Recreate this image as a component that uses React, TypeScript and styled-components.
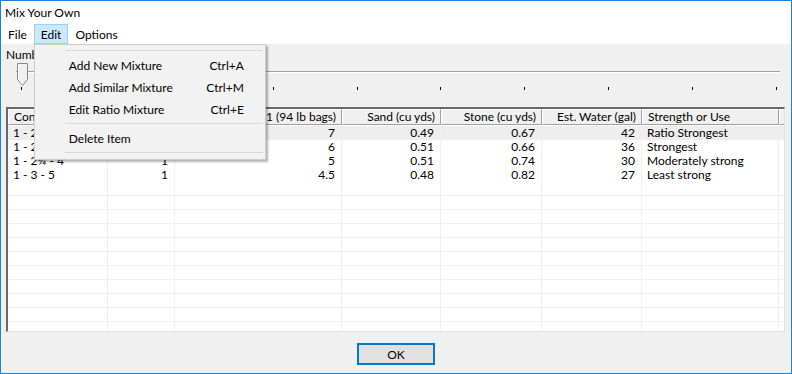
import React from 'react'
import styled, { createGlobalStyle } from 'styled-components'

const GlobalStyle = createGlobalStyle`
  html, body {
    margin: 0;
    padding: 0;
    background: #ffffff;
  }
  body {
    font-family: 'Segoe UI', Lato, 'Noto Sans', Arial, sans-serif;
    font-size: 12px;
    color: #000;
  }
`

const Window = styled.div`
  width: 792px;
  height: 374px;
  box-sizing: border-box;
  border: 1px solid #1883d7;
  display: flex;
  flex-direction: column;
  background: #f0f0f0;
  overflow: hidden;
`

const TitleBar = styled.div`
  height: 23px;
  background: #fff;
  display: flex;
  align-items: center;
  padding-left: 4px;
  font-size: 12px;
`

const MenuBar = styled.div`
  height: 20px;
  background: #fff;
  display: flex;
  align-items: stretch;
`

interface MenuItemProps {
  active?: boolean
}

const MenuBarItem = styled.div<MenuItemProps>`
  position: relative;
  display: flex;
  align-items: center;
  padding: 0 6px;
  border: 1px solid ${(p) => (p.active ? '#99d1ff' : 'transparent')};
  background: ${(p) => (p.active ? '#cce8ff' : 'transparent')};
`

const Dropdown = styled.div`
  position: absolute;
  top: 19px;
  left: -1px;
  width: 232px;
  box-sizing: border-box;
  background: #f2f2f2;
  border: 1px solid #cccccc;
  box-shadow: 2px 2px 2px rgba(0, 0, 0, 0.3);
  padding: 2px 2px 3px 2px;
  z-index: 10;
`

const DropItem = styled.div`
  height: 22px;
  display: flex;
  align-items: center;
  justify-content: space-between;
  padding: 0 19px 0 32px;
  white-space: nowrap;
`

const Separator = styled.div`
  height: 7px;
  display: flex;
  align-items: center;
  padding-left: 28px;

  &::after {
    content: '';
    flex: 1;
    height: 1px;
    background: #d7d7d7;
  }
`

const Client = styled.div`
  flex: 1;
  display: flex;
  flex-direction: column;
  padding: 0 5px;
  min-height: 0;
`

const Label = styled.div`
  height: 14px;
  margin-top: 4px;
  line-height: 14px;
  white-space: nowrap;
`

const SliderBox = styled.div`
  position: relative;
  height: 45px;
`

const Track = styled.div`
  position: absolute;
  left: 10px;
  right: 6px;
  top: 9px;
  height: 1px;
  background: #a0a0a0;
  border-bottom: 1px solid #fff;
`

const Ticks = styled.div`
  position: absolute;
  left: 15px;
  right: 9px;
  top: 25px;
  display: flex;
  justify-content: space-between;
`

const Tick = styled.div`
  width: 1px;
  height: 3px;
  background: #000;
`

const Thumb = styled.svg`
  position: absolute;
  left: 11px;
  top: 1px;
`

const ListView = styled.div`
  flex: 1;
  min-height: 0;
  border-style: solid;
  border-width: 2px 1px 1px 2px;
  border-color: #696969 #e3e3e3 #e3e3e3 #696969;
  background: #fff;
  overflow: hidden;
  display: flex;
  flex-direction: column;
  margin-right: 1px;
`

const cols = '100px 67px 167px 99px 101px 100px 137px 1fr'

const HeaderRow = styled.div`
  display: grid;
  grid-template-columns: ${cols};
  height: 16px;
  flex-shrink: 0;
  margin-bottom: 1px;
  background: #f0f0f0;
`

interface CellProps {
  right?: boolean
}

const HeadCell = styled.div<CellProps>`
  box-sizing: border-box;
  border-style: solid;
  border-width: 1px;
  border-color: #fff #a0a0a0 #a0a0a0 #fff;
  display: flex;
  align-items: center;
  justify-content: ${(p) => (p.right ? 'flex-end' : 'flex-start')};
  padding: 0 5px;
  white-space: nowrap;
  overflow: hidden;
  line-height: 14px;
`

interface RowProps {
  hot?: boolean
}

const Row = styled.div<RowProps>`
  display: grid;
  grid-template-columns: ${cols};
  height: 14px;
  flex-shrink: 0;
  background: ${(p) => (p.hot ? '#eeeeee' : '#fff')};
`

const Cell = styled.div<CellProps>`
  box-sizing: border-box;
  border-right: 1px solid #f0f0f0;
  border-bottom: 1px solid #f0f0f0;
  display: flex;
  align-items: center;
  justify-content: ${(p) => (p.right ? 'flex-end' : 'flex-start')};
  padding: 0 6px 0 5px;
  white-space: nowrap;
  line-height: 14px;
`

const Footer = styled.div`
  height: 41px;
  display: flex;
  justify-content: center;
  padding-top: 11px;
  box-sizing: border-box;
`

const OkButton = styled.button`
  width: 78px;
  height: 22px;
  box-sizing: border-box;
  border: 2px solid #0078d7;
  background: #e1e1e1;
  font-family: inherit;
  font-size: 12px;
  color: #000;
  padding: 0;
`

const headers = [
  { label: 'Concrete Ratio', right: false },
  { label: 'Cu Yds', right: true },
  { label: 'Cement Size 1 (94 lb bags)', right: true },
  { label: 'Sand (cu yds)', right: true },
  { label: 'Stone (cu yds)', right: true },
  { label: 'Est. Water (gal)', right: true },
  { label: 'Strength or Use', right: false },
]

const data = [
  ['1 - 2 - 3', '1', '7', '0.49', '0.67', '42', 'Ratio Strongest'],
  ['1 - 2 - 3½', '1', '6', '0.51', '0.66', '36', 'Strongest'],
  ['1 - 2¼ - 4', '1', '5', '0.51', '0.74', '30', 'Moderately strong'],
  ['1 - 3 - 5', '1', '4.5', '0.48', '0.82', '27', 'Least strong'],
]

const rows: string[][] = [...data]
while (rows.length < 15) rows.push(['', '', '', '', '', '', ''])

const App = () => (
  <>
    <GlobalStyle />
    <Window>
      <TitleBar>Mix Your Own</TitleBar>
      <MenuBar>
        <MenuBarItem>File</MenuBarItem>
        <MenuBarItem active>
          Edit
          <Dropdown>
            <Separator />
            <DropItem>
              <span>Add New Mixture</span>
              <span>Ctrl+A</span>
            </DropItem>
            <DropItem>
              <span>Add Similar Mixture</span>
              <span>Ctrl+M</span>
            </DropItem>
            <DropItem>
              <span>Edit Ratio Mixture</span>
              <span>Ctrl+E</span>
            </DropItem>
            <Separator />
            <DropItem>
              <span>Delete Item</span>
            </DropItem>
            <Separator />
          </Dropdown>
        </MenuBarItem>
        <MenuBarItem>Options</MenuBarItem>
      </MenuBar>
      <Client>
        <Label>Number of Mixtures</Label>
        <SliderBox>
          <Track />
          <Ticks>
            {Array.from({ length: 10 }).map((_, i) => (
              <Tick key={i} />
            ))}
          </Ticks>
          <Thumb width="11" height="24" viewBox="0 0 11 24">
            <path d="M0.5 0.5 H10.5 V16.5 L5.5 22.5 L0.5 16.5 Z" fill="#f0f0f0" stroke="#888" />
            <path d="M1.5 1.5 V16 L5.5 21" fill="none" stroke="#fff" />
          </Thumb>
        </SliderBox>
        <ListView>
          <HeaderRow>
            {headers.map((h) => (
              <HeadCell key={h.label} right={h.right}>
                {h.label}
              </HeadCell>
            ))}
            <HeadCell />
          </HeaderRow>
          {rows.map((r, i) => (
            <Row key={i} hot={i === 0}>
              {r.map((v, j) => (
                <Cell key={j} right={j > 0 && j < 6}>
                  {v}
                </Cell>
              ))}
              <Cell />
            </Row>
          ))}
        </ListView>
        <Footer>
          <OkButton>OK</OkButton>
        </Footer>
      </Client>
    </Window>
  </>
)

export default App
